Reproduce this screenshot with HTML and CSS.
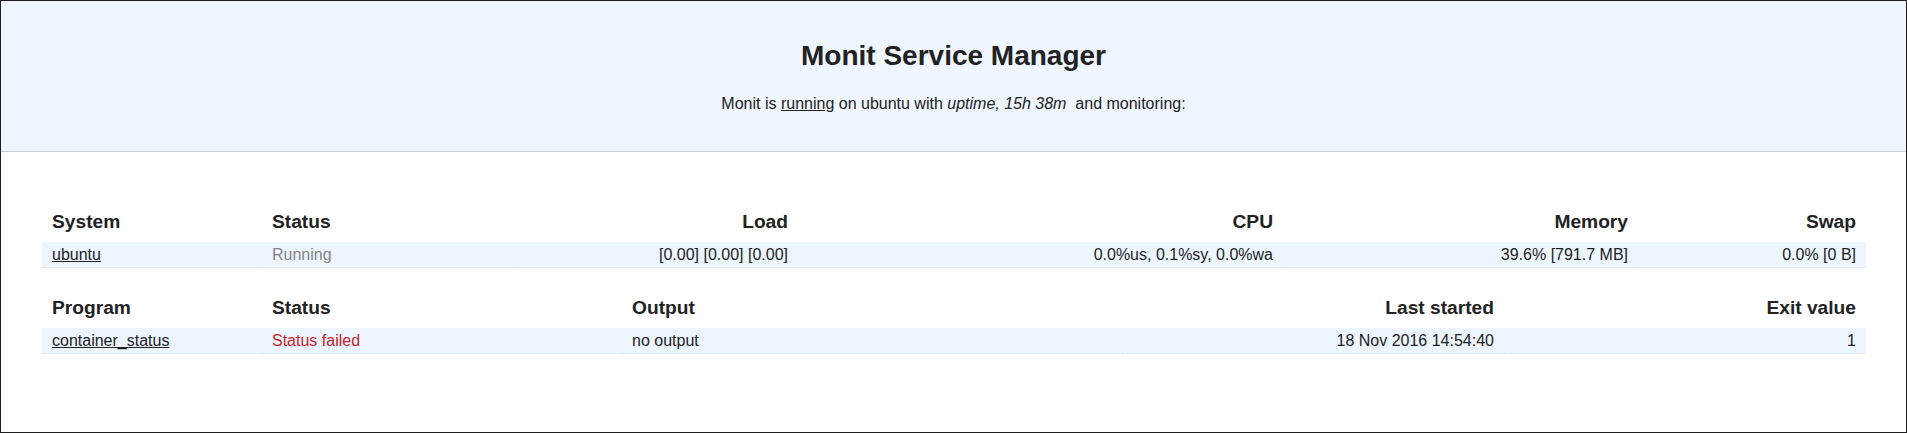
FILE: index.html
```html
<!DOCTYPE html>
<html lang="en">
<head>
<meta charset="utf-8">
<title>Monit: ubuntu</title>
<link rel="stylesheet" href="styles.css">
</head>
<body>
<div class="frame">
  <div class="header">
    <h1 class="title">Monit Service Manager</h1>
    <p class="subtitle">Monit is <a href="#">running</a> on ubuntu with <i>uptime, 15h 38m</i>&nbsp; and monitoring:</p>
  </div>
  <div class="main">
    <table class="svc">
      <colgroup>
        <col class="c-first"><col class="s-status"><col class="s-load"><col class="s-cpu"><col class="s-mem"><col class="s-swap">
      </colgroup>
      <tr>
        <th class="left">System</th>
        <th class="left">Status</th>
        <th class="right">Load</th>
        <th class="right">CPU</th>
        <th class="right">Memory</th>
        <th class="right">Swap</th>
      </tr>
      <tr class="stripe">
        <td class="left"><a href="#">ubuntu</a></td>
        <td class="left gray-text">Running</td>
        <td class="right">[0.00]&nbsp;[0.00]&nbsp;[0.00]</td>
        <td class="right">0.0%us,&nbsp;0.1%sy,&nbsp;0.0%wa</td>
        <td class="right">39.6% [791.7&nbsp;MB]</td>
        <td class="right">0.0% [0&nbsp;B]</td>
      </tr>
    </table>
    <table class="svc">
      <colgroup>
        <col class="c-first"><col class="p-status"><col class="p-output"><col class="p-last"><col class="p-exit">
      </colgroup>
      <tr>
        <th class="left">Program</th>
        <th class="left">Status</th>
        <th class="left">Output</th>
        <th class="right">Last started</th>
        <th class="right">Exit value</th>
      </tr>
      <tr class="stripe">
        <td class="left"><a href="#">container_status</a></td>
        <td class="left red-text">Status failed</td>
        <td class="left">no output</td>
        <td class="right">18 Nov 2016 14:54:40</td>
        <td class="right">1</td>
      </tr>
    </table>
  </div>
</div>
</body>
</html>
```

FILE: styles.css
```css
html, body {
  margin: 0;
  padding: 0;
  background: #ffffff;
}

body {
  font: normal 16px/20px "Liberation Sans", Arial, Helvetica, sans-serif;
  color: #222222;
}

.frame {
  box-sizing: border-box;
  height: 433px;
  border: 1px solid #1e1e1e;
  overflow: hidden;
}

.header {
  background: #eff6ff;
  border-bottom: 1px solid #c6cfd8;
  padding: 38px 0 37px 0;
  text-align: center;
}

.title {
  margin: 0;
  font-size: 28px;
  line-height: 34px;
  font-weight: bold;
  color: #222222;
}

.subtitle {
  margin: 21px 0 0 0;
  font-size: 16px;
  line-height: 20px;
}

a {
  color: #222222;
  text-decoration: underline;
}

.main {
  padding: 30px 40px 0 41px;
}

.svc {
  width: 100%;
  table-layout: fixed;
  border-collapse: collapse;
  border: 0;
}

.svc th {
  padding: 30px 10px 10px 10px;
  font-size: 19.2px;
  line-height: 20px;
  font-weight: bold;
  white-space: nowrap;
}

.svc td {
  padding: 3px 10px 2px 10px;
  line-height: 20px;
  white-space: nowrap;
  border-bottom: 1px dotted #d9e2ea;
}

.stripe {
  background: #edf5ff;
}

.left { text-align: left; }
.right { text-align: right; }

.gray-text { color: #858585; }
.red-text { color: #cc2229; }

.c-first { width: 220px; }

.s-status { width: 250px; }
.s-load { width: 286px; }
.s-cpu { width: 485px; }
.s-mem { width: 355px; }
.s-swap { width: 228px; }

.p-status { width: 360px; }
.p-output { width: 500px; }
.p-last { width: 382px; }
.p-exit { width: 362px; }
```
